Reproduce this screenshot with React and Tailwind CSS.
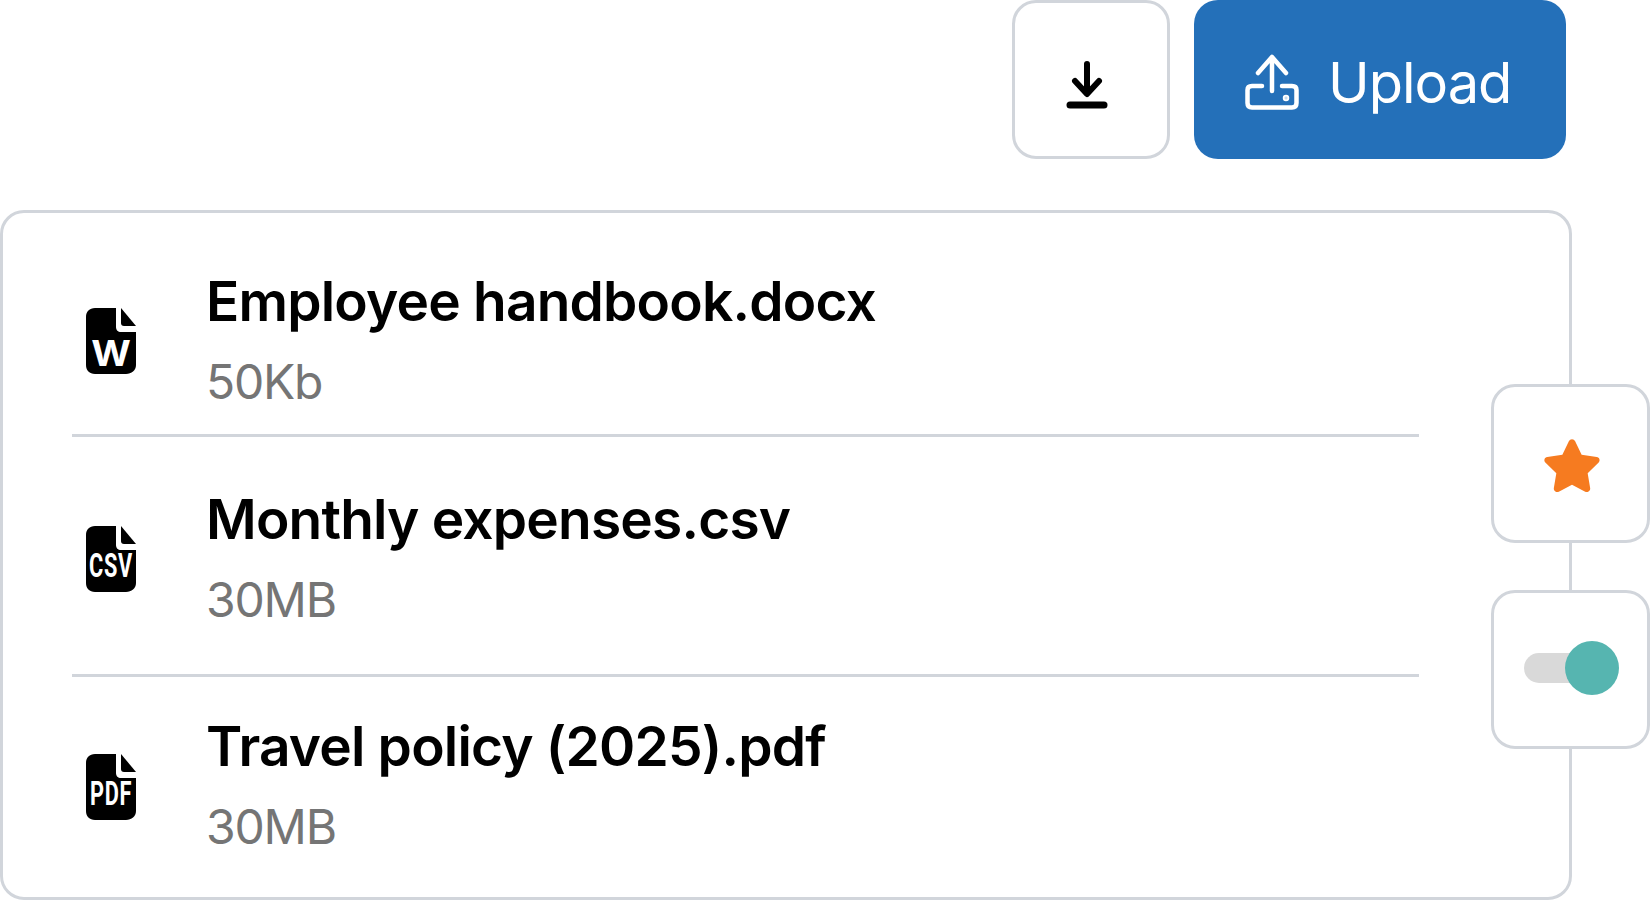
function FileIcon({ label, wide }) {
  return (
    <div className="relative h-[68px] w-[52px] shrink-0">
      <svg viewBox="0 0 52 68" className="absolute inset-0 h-full w-full">
        <path d="M10 1H31V20C31 23 33 25 36 25H51V58C51 63.5 46.5 67 41 67H10C4.5 67 1 63.5 1 58V10C1 4.5 4.5 1 10 1Z" fill="#000" />
        <path d="M36 1L51 19H39C37 19 36 18 36 16Z" fill="#000" />
      </svg>
      {wide ? (
        <span className="absolute inset-x-[-10px] bottom-[11px] scale-x-[0.64] text-center font-['Roboto',sans-serif] text-[34px] font-bold leading-[34px] tracking-[1px] text-white">
          {label}
        </span>
      ) : (
        <span className="absolute inset-x-0 bottom-[5px] scale-x-[1.06] text-center font-['Inter',sans-serif] text-[36px] font-bold leading-[34px] text-white">
          {label}
        </span>
      )}
    </div>
  );
}

function FileRow({ icon, name, size, className }) {
  return (
    <div className={`flex items-center ${className}`}>
      <div className="ml-[13px] mr-[69px]">{icon}</div>
      <div className="mb-[4px]">
        <div className="text-[55px] font-semibold leading-[64px] tracking-[-0.8px] text-black">{name}</div>
        <div className="mt-[21px] text-[48px] font-normal leading-[56px] tracking-[-1.2px] text-[#757575]">{size}</div>
      </div>
    </div>
  );
}

export default function App() {
  return (
    <div className="relative h-[900px] w-[1650px] overflow-hidden bg-white font-['Inter',sans-serif]">
      <div className="flex justify-end gap-[24px] pr-[84px]">
        <button className="flex h-[159px] w-[158px] items-center justify-center rounded-[24px] border-[3px] border-[#d1d5db] bg-white">
          <svg viewBox="0 0 42 48" className="ml-[-8px] mt-[10px] h-[48px] w-[42px]" fill="none" stroke="#000" strokeLinecap="round" strokeLinejoin="round">
            <path d="M21 3V31M9 20L21 33L33 20" strokeWidth="6" />
            <path d="M4 44H38" strokeWidth="7" />
          </svg>
        </button>
        <button className="flex h-[159px] w-[372px] items-center rounded-[24px] bg-[#2470b9] pl-[51px] text-white">
          <svg viewBox="0 0 54 56" className="mt-[4px] h-[56px] w-[54px]" fill="none" stroke="#fff" strokeWidth="4.5" strokeLinecap="round" strokeLinejoin="round">
            <path d="M27 37V3M13 19L27 3L41 19" />
            <path d="M17 32H7C4 32 2.5 33.5 2.5 36V49C2.5 52 4 53.5 7 53.5H47C50 53.5 51.5 52 51.5 49V36C51.5 33.5 50 32 47 32H37" />
            <circle cx="41" cy="44" r="1" fill="#fff" />
          </svg>
          <span className="ml-[29px] mt-[6px] text-[56px] font-normal leading-none tracking-[-1px]">Upload</span>
        </button>
      </div>

      <div className="mt-[51px] h-[690px] w-[1572px] rounded-[24px] border-[3px] border-[#d1d5db] bg-white px-[69px]">
        <div className="w-[1347px]">
          <FileRow className="h-[224px] border-b-[3px] border-[#d1d5db] pt-[35px]" icon={<FileIcon label="W" />} name="Employee handbook.docx" size="50Kb" />
          <FileRow className="h-[240px] border-b-[3px] border-[#d1d5db] pt-[7px]" icon={<FileIcon label="CSV" wide />} name="Monthly expenses.csv" size="30MB" />
          <FileRow className="h-[219px]" icon={<FileIcon label="PDF" wide />} name="Travel policy (2025).pdf" size="30MB" />
        </div>
      </div>

      <div className="absolute left-[1491px] top-[384px] flex h-[159px] w-[159px] items-center justify-center rounded-[24px] border-[3px] border-[#d1d5db] bg-white">
        <svg viewBox="0 0 24 24" className="ml-[2px] mt-[2px] h-[66px] w-[66px]">
          <path fill="#f67b20" d="M12 2.6c.5 0 .9.3 1.1.7l2.4 5 5.5.8c1 .1 1.4 1.3.7 2l-4 3.9.9 5.4c.2 1-.9 1.8-1.8 1.3L12 19.2l-4.8 2.5c-.9.5-2-.3-1.8-1.3l.9-5.4-4-3.9c-.7-.7-.3-1.9.7-2l5.5-.8 2.4-5c.2-.4.6-.7 1.1-.7z" />
        </svg>
      </div>

      <div className="absolute left-[1491px] top-[590px] flex h-[159px] w-[159px] items-center rounded-[24px] border-[3px] border-[#d1d5db] bg-white pl-[30px]">
        <div className="relative mt-[-4px] h-[30px] w-[80px] rounded-full bg-[#d9d9d9]">
          <div className="absolute left-[41px] top-[-12px] h-[54px] w-[54px] rounded-full bg-[#56b5b0]" />
        </div>
      </div>
    </div>
  );
}
